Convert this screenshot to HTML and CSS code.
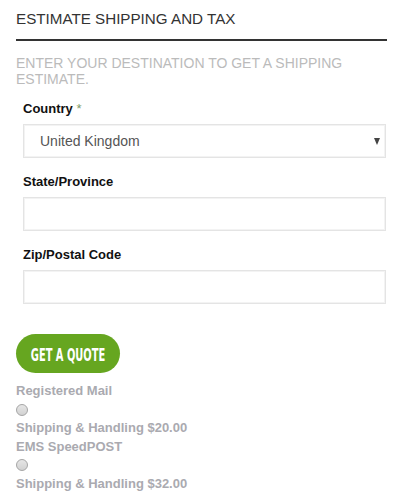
FILE: index.html
```html
<!DOCTYPE html>
<html lang="en">
<head>
<meta charset="utf-8">
<title>Estimate Shipping and Tax</title>
<link rel="stylesheet" href="styles.css">
</head>
<body>
<div class="estimate">
  <h2 class="estimate-title">ESTIMATE SHIPPING AND TAX</h2>
  <p class="estimate-intro">ENTER YOUR DESTINATION TO GET A SHIPPING ESTIMATE.</p>
  <form class="estimate-form">
    <div class="field">
      <label class="field-label">Country <span class="req">*</span></label>
      <div class="select-wrap">
        <select class="field-control select">
          <option>United Kingdom</option>
        </select>
      </div>
    </div>
    <div class="field">
      <label class="field-label">State/Province</label>
      <input class="field-control" type="text">
    </div>
    <div class="field">
      <label class="field-label">Zip/Postal Code</label>
      <input class="field-control" type="text">
    </div>
  </form>
  <button class="quote-btn" type="button"><span class="quote-text">GET A QUOTE</span></button>
  <div class="methods">
    <div class="method-line">Registered Mail</div>
    <div class="method-line"><input class="radio" type="radio" name="ship"></div>
    <div class="method-line">Shipping &amp; Handling $20.00</div>
    <div class="method-line">EMS SpeedPOST</div>
    <div class="method-line"><input class="radio" type="radio" name="ship"></div>
    <div class="method-line">Shipping &amp; Handling $32.00</div>
  </div>
</div>
</body>
</html>
```
FILE: styles.css
```css
* { box-sizing: border-box; }
html, body { margin: 0; padding: 0; background: #fff; }
body { font-family: "Liberation Sans", Arial, sans-serif; color: #333; }

.estimate { padding: 0 13px 0 16px; }

.estimate-title {
  margin: 9px 0 0;
  padding-bottom: 10px;
  border-bottom: 2px solid #333;
  font-size: 15.2px;
  line-height: 20px;
  font-weight: normal;
  color: #333;
}

.estimate-intro {
  margin: 14px 0 0;
  font-size: 14px;
  line-height: 16px;
  color: #bbb;
}

.estimate-form { padding: 0 1px 0 7px; margin-top: 12px; }

.field { display: flex; flex-direction: column; gap: 5px; }
.field + .field { margin-top: 14px; }

.field-label {
  font-size: 13px;
  line-height: 20px;
  font-weight: bold;
  color: #111;
}
.req { color: #7f9d6a; font-weight: normal; }

.field-control {
  display: block;
  width: 100%;
  height: 34px;
  border: 1px solid #e4e4e4;
  box-shadow: inset 0 0 0 1px #f3f3f3;
  background: #fff;
  padding: 0 16px;
  font-family: "Liberation Sans", Arial, sans-serif;
  font-size: 14px;
  color: #555;
  border-radius: 0;
  outline: none;
}

.select-wrap { position: relative; }
.select { appearance: none; -webkit-appearance: none; }
.select-wrap::after {
  content: "";
  position: absolute;
  right: 6px;
  top: 14px;
  border-left: 3.5px solid transparent;
  border-right: 3.5px solid transparent;
  border-top: 7px solid #444;
  pointer-events: none;
}

.quote-btn {
  display: flex;
  align-items: center;
  justify-content: center;
  margin-top: 30px;
  width: 104px;
  height: 39px;
  border: none;
  border-radius: 20px;
  background: #66a620;
  padding: 0;
  cursor: pointer;
}
.quote-text {
  display: inline-block;
  font-family: "DejaVu Sans Condensed", "Liberation Sans", sans-serif;
  font-weight: bold;
  font-size: 18px;
  color: #fff;
  transform: scaleX(0.61);
  white-space: nowrap;
  margin-top: 1px;
}

.methods { margin-top: 9px; }
.method-line {
  font-size: 13px;
  line-height: 18.5px;
  height: 18.5px;
  font-weight: bold;
  color: #aaaab0;
  display: flex;
  align-items: center;
}

.radio {
  appearance: none;
  -webkit-appearance: none;
  margin: 0;
  width: 12px;
  height: 12px;
  border-radius: 50%;
  border: 1px solid #a5a5a5;
  background: linear-gradient(#e6e6e6, #d2d2d2);
}
```
